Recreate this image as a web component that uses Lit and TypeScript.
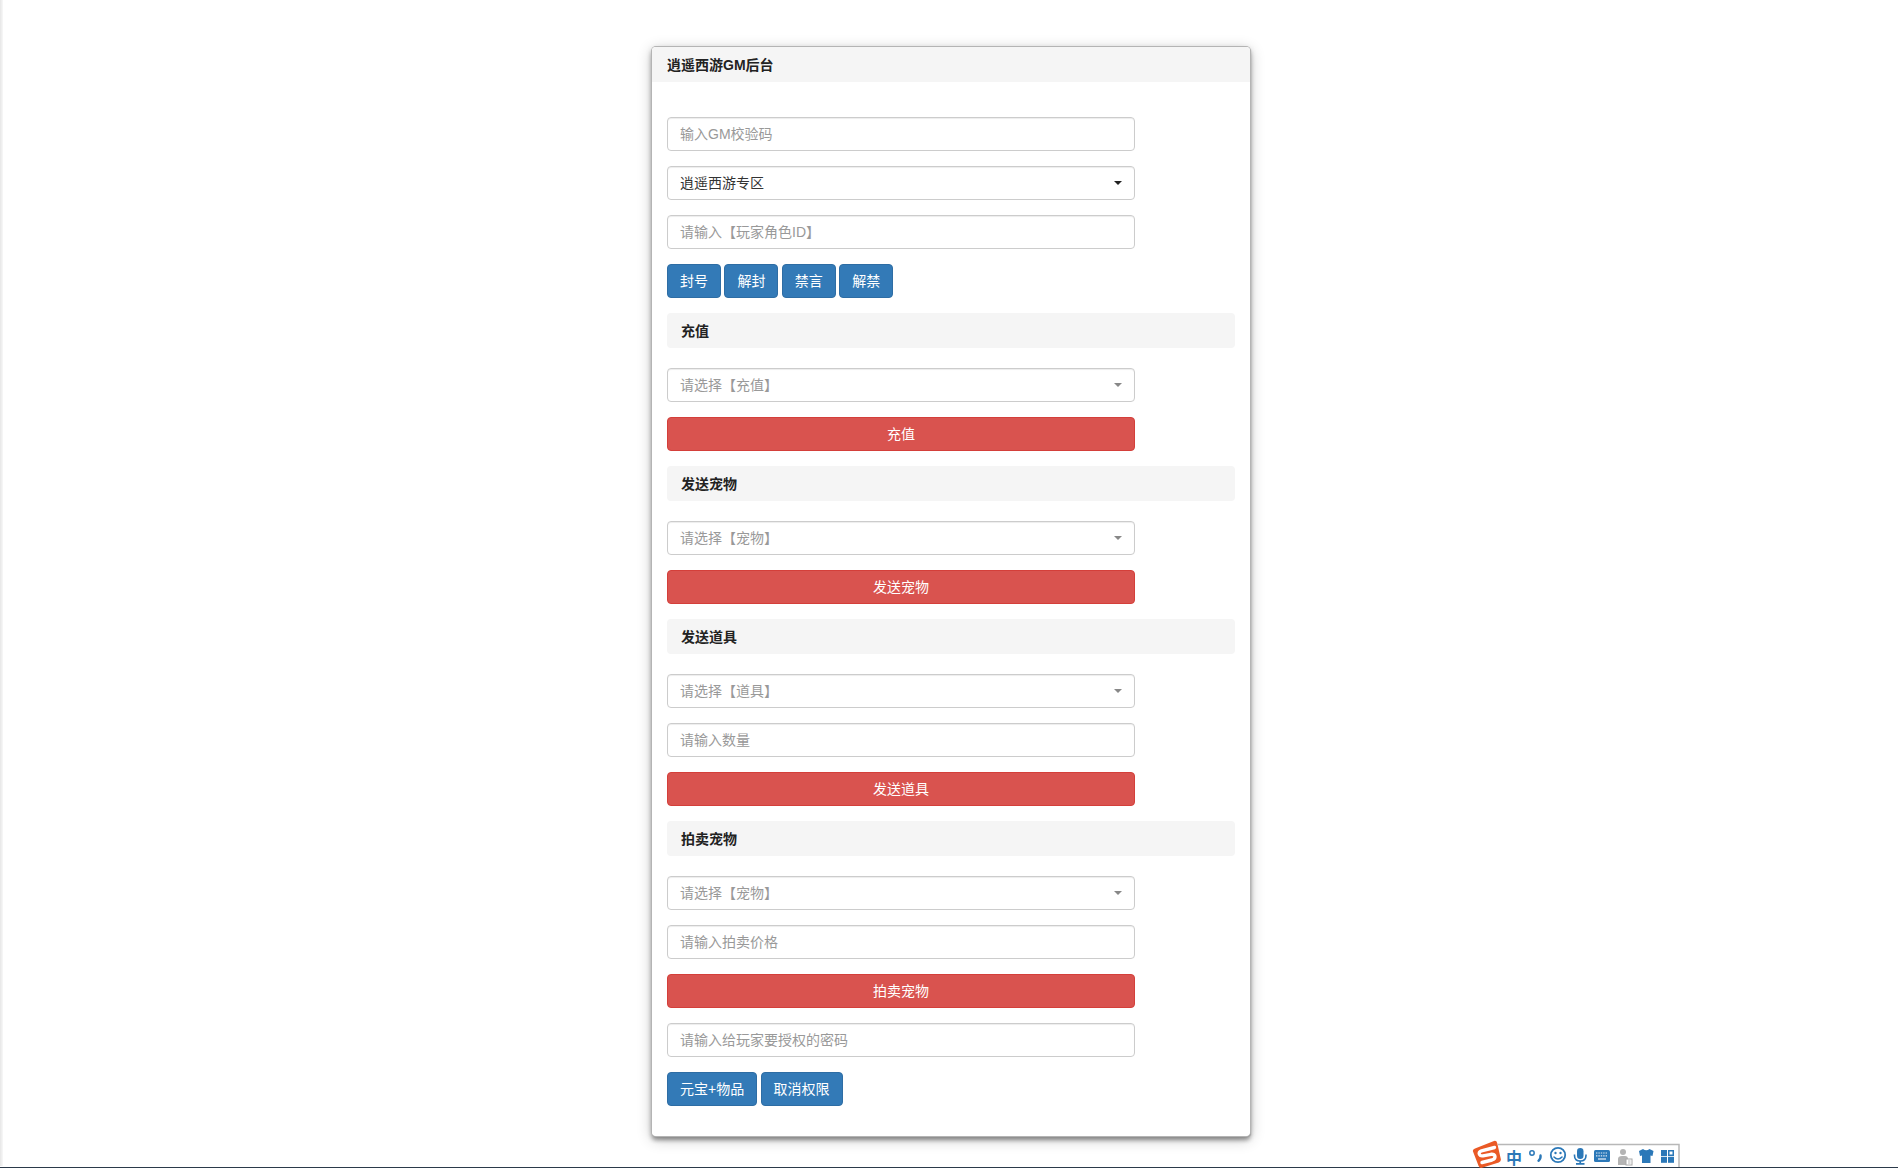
import { LitElement, html, css, svg } from "lit";
import { customElement } from "lit/decorators.js";

type Row =
  | { k: "input"; t: string }
  | { k: "select"; t: string; on?: boolean }
  | { k: "red"; t: string }
  | { k: "head"; t: string }
  | { k: "blue"; t: string[] };

const rows: Row[] = [
  { k: "input", t: "输入GM校验码" },
  { k: "select", t: "逍遥西游专区", on: true },
  { k: "input", t: "请输入【玩家角色ID】" },
  { k: "blue", t: ["封号", "解封", "禁言", "解禁"] },
  { k: "head", t: "充值" },
  { k: "select", t: "请选择【充值】" },
  { k: "red", t: "充值" },
  { k: "head", t: "发送宠物" },
  { k: "select", t: "请选择【宠物】" },
  { k: "red", t: "发送宠物" },
  { k: "head", t: "发送道具" },
  { k: "select", t: "请选择【道具】" },
  { k: "input", t: "请输入数量" },
  { k: "red", t: "发送道具" },
  { k: "head", t: "拍卖宠物" },
  { k: "select", t: "请选择【宠物】" },
  { k: "input", t: "请输入拍卖价格" },
  { k: "red", t: "拍卖宠物" },
  { k: "input", t: "请输入给玩家要授权的密码" },
  { k: "blue", t: ["元宝+物品", "取消权限"] },
];

@customElement("app-root")
export class AppRoot extends LitElement {
  static styles = css`
    :host {
      display: block;
      position: relative;
      height: 1168px;
      overflow: hidden;
      background: #fff;
      font-family: "Liberation Sans", "Noto Sans CJK SC", sans-serif;
      font-size: 14px;
      line-height: 20px;
      color: #333;
    }
    .page { display: flex; justify-content: center; padding: 47px 0 0 4px; }
    .panel {
      width: 598px;
      height: 1089px;
      box-sizing: border-box;
      background: #fff;
      border-radius: 4px;
      overflow: hidden;
    }
    .shadow {
      border-radius: 4px;
      box-shadow:
        0 0 0 1px #b4b4b4,
        1px 1px 1px 0 #999,
        0 4px 4px rgba(0, 0, 0, 0.32),
        0 2px 6px rgba(0, 0, 0, 0.18),
        0 3px 15px rgba(0, 0, 0, 0.24);
    }
    .title { height: 35px; box-sizing: border-box; padding: 8px 15px 7px; background: #f5f5f5; font-weight: 700; color: #222; }
    .body { padding: 35px 15px 0 15px; display: flex; flex-direction: column; }
    .field {
      width: 468px; height: 34px; box-sizing: border-box;
      border: 1px solid #ccc; border-radius: 4px; padding: 6px 12px;
      background: #fff; margin-bottom: 15px;
      display: flex; align-items: center; justify-content: space-between;
      color: #999; box-shadow: inset 0 1px 1px rgba(0,0,0,.075);
    }
    .field.on { color: #333; }
    .caret { width: 0; height: 0; border: 4px solid transparent; border-top-color: #888; border-bottom: 0; }
    .on .caret { border-top-color: #222; }
    .red {
      width: 468px; height: 34px; box-sizing: border-box; margin-bottom: 15px;
      background: #d9534f; border: 1px solid #d43f3a; border-radius: 4px; color: #fff;
      display: flex; align-items: center; justify-content: center;
    }
    .btns { display: flex; gap: 3.4px; margin-bottom: 15px; }
    .blue {
      height: 34px; box-sizing: border-box; padding: 6px 12px; background: #337ab7;
      border: 1px solid #2e6da4; border-radius: 4px; color: #fff;
    }
    .head { height: 35px; box-sizing: border-box; padding: 8px 15px 7px 14px; margin-bottom: 20px; background: #f5f5f5; border-radius: 4px; font-weight: 700; color: #222; }
    .edge { position: absolute; left: 0; top: 0; bottom: 2px; width: 3px; background: linear-gradient(90deg, #e6e6e6, #f8f8f8); }
    .taskbar { position: absolute; left: 0; right: 0; bottom: 0; height: 1px; background: #2b3a4a; }
    .tray { position: absolute; left: 1470px; top: 1138px; width: 212px; height: 30px; }
    .tray svg { position: absolute; left: 0; top: 0; }
    .zh { position: absolute; left: 36px; top: 9px; font: 700 16px/20px "Noto Sans CJK SC", sans-serif; color: #2b78b8; }
  `;

  renderRow(r: Row) {
    switch (r.k) {
      case "input":
        return html`<div class="field">${r.t}</div>`;
      case "select":
        return html`<div class="field ${r.on ? "on" : ""}"><span>${r.t}</span><i class="caret"></i></div>`;
      case "red":
        return html`<div class="red">${r.t}</div>`;
      case "head":
        return html`<div class="head">${r.t}</div>`;
      case "blue":
        return html`<div class="btns">${r.t.map((b) => html`<div class="blue">${b}</div>`)}</div>`;
    }
  }

  tray() {
    const blue = "#2b78b8";
    return svg`<svg width="212" height="30" viewBox="0 0 212 30" fill="none">
      <path d="M28 6.500H209V29" stroke="#b8b8b8" stroke-width="1.500" fill="#fff"/>
      <path d="M5 10.500L24 3Q26.500 2.300 27.200 5L30.800 21Q31.300 23.500 28.800 24.500L12 29.800Q9.500 30.300 8.600 28L3 13.500Q2.300 11.500 5 10.500Z" fill="#ea5a26"/>
      <path d="M24.500 9.500L11.500 12.800Q8.300 14 9.500 16.500Q10.500 18.300 13 17.800L21 16.300Q25 16 25 18.800Q25 21 22 22L12 24.500" stroke="#fff" stroke-width="3.400" stroke-linecap="round" stroke-linejoin="round"/>
      <circle cx="62" cy="15" r="2.200" stroke="${blue}" stroke-width="1.500"/>
      <path d="M70.500 17.500Q71 20.500 68.500 22.800" stroke="${blue}" stroke-width="2.400" stroke-linecap="round"/>
      <circle cx="88" cy="17" r="7.200" stroke="${blue}" stroke-width="1.800"/>
      <circle cx="85.500" cy="15" r="1.200" fill="${blue}"/>
      <circle cx="90.500" cy="15" r="1.200" fill="${blue}"/>
      <path d="M84 19Q88 23 92 19" stroke="${blue}" stroke-width="1.600" stroke-linecap="round"/>
      <rect x="107" y="10" width="6.500" height="11" rx="3.250" fill="${blue}"/>
      <path d="M104.500 16.500V17.500Q104.500 23 110.250 23Q116 23 116 17.500V16.500" stroke="${blue}" stroke-width="1.600"/>
      <path d="M110.250 23V25.500M106 25.800H114.500" stroke="${blue}" stroke-width="1.700"/>
      <rect x="124" y="12" width="16" height="12" rx="1.500" fill="${blue}"/>
      <path d="M126 15H138M126 17.800H138" stroke="#dfeaf4" stroke-width="1.200" stroke-dasharray="1.400 1"/>
      <path d="M128 21H136" stroke="#dfeaf4" stroke-width="1.300"/>
      <circle cx="153" cy="14" r="3" fill="#b4b4b4"/>
      <path d="M148 27V21Q148 18 152 18H155Q158 18 158 21V27Z" fill="#b4b4b4"/>
      <rect x="156" y="21" width="6" height="6" fill="#fff" stroke="#a8a8a8"/>
      <path d="M158 23H160.500M158 25H160.500" stroke="#a8a8a8" stroke-width="0.800"/>
      <path d="M173 11L169 13L170 18L172 17.500V25H180.500V17.500L182.500 18L183.500 13L179.500 11Q176.250 13.500 173 11Z" fill="${blue}"/>
      <rect x="191" y="18.800" width="6" height="6" fill="${blue}"/>
      <rect x="198" y="18.800" width="6" height="6" fill="${blue}"/>
      <rect x="191" y="12" width="6" height="6" fill="${blue}"/>
      <rect x="198.750" y="12.750" width="4.500" height="4.500" stroke="${blue}" stroke-width="1.500"/>
    </svg>`;
  }

  render() {
    return html`
      <div class="edge"></div>
      <div class="page">
        <div class="shadow"><div class="panel">
          <div class="title">逍遥西游GM后台</div>
          <div class="body">${rows.map((r) => this.renderRow(r))}</div>
        </div></div>
      </div>
      <div class="taskbar"></div>
      <div class="tray">${this.tray()}<span class="zh">中</span></div>
    `;
  }
}
